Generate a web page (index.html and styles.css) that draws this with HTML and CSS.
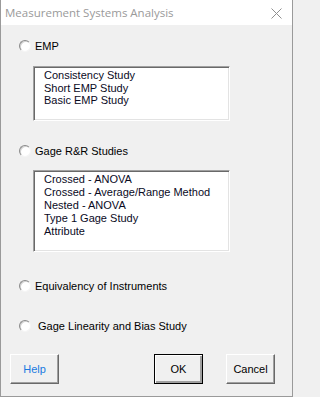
FILE: index.html
```html
<!DOCTYPE html>
<html>
<head>
<meta charset="utf-8">
<link rel="stylesheet" href="styles.css">
</head>
<body>
<div class="window">
  <div class="titlebar">
    <span class="title">Measurement Systems Analysis</span>
    <svg class="close" width="11" height="11" viewBox="0 0 11 11"><path d="M0.5 0.5 L10.5 10.5 M10.5 0.5 L0.5 10.5" stroke="#8f8f8f" stroke-width="1" fill="none"/></svg>
  </div>
  <div class="content">
    <div class="radio-row r1"><span class="radio"></span><span class="label">EMP</span></div>
    <div class="listbox lb1">
      <div>Consistency Study</div>
      <div>Short EMP Study</div>
      <div>Basic EMP Study</div>
    </div>
    <div class="radio-row r2"><span class="radio"></span><span class="label">Gage R&amp;R Studies</span></div>
    <div class="listbox lb2">
      <div>Crossed - ANOVA</div>
      <div>Crossed - Average/Range Method</div>
      <div>Nested - ANOVA</div>
      <div>Type 1 Gage Study</div>
      <div>Attribute</div>
    </div>
    <div class="radio-row r3"><span class="radio"></span><span class="label">Equivalency of Instruments</span></div>
    <div class="radio-row r4"><span class="radio"></span><span class="label">&nbsp;Gage Linearity and Bias Study</span></div>
    <div class="buttons">
      <button class="btn help">Help</button>
      <button class="btn ok">OK</button>
      <button class="btn cancel">Cancel</button>
    </div>
  </div>
</div>
</body>
</html>
```

FILE: styles.css
```css
html, body {
  margin: 0;
  padding: 0;
  background: #f0f0f0;
}
.window {
  width: 293px;
  height: 397px;
  box-sizing: border-box;
  border-left: 1px solid #9a9a9a;
  border-right: 1px solid #9a9a9a;
  border-bottom: 1px solid #9a9a9a;
  background: #f0f0f0;
  font-family: "Liberation Sans", Arial, sans-serif;
  font-size: 11px;
  color: #000;
  display: flex;
  flex-direction: column;
}
.titlebar {
  height: 25px;
  background: #fff;
  display: flex;
  align-items: center;
  justify-content: space-between;
  padding: 0 10px 0 4px;
  flex-shrink: 0;
}
.title {
  font-family: "Open Sans", "Noto Sans", sans-serif;
  font-size: 11.5px;
  color: #9a9a9a;
  margin-top: 0px;
}
.close {
  display: block;
  margin-top: 1px;
}
.content {
  padding-left: 18px;
  display: flex;
  flex-direction: column;
}
.radio-row {
  height: 12px;
  display: flex;
  align-items: center;
  gap: 4px;
  line-height: 13px;
}
.r1 { margin-top: 15px; }
.r2 { margin-top: 24px; }
.r3 { margin-top: 28px; }
.r4 { margin-top: 28px; }
.radio {
  width: 12px;
  height: 12px;
  box-sizing: border-box;
  border-radius: 50%;
  background: #fff;
  border: 1px solid;
  border-color: #8a8a8a #f4f4f4 #f4f4f4 #8a8a8a;
  box-shadow: inset 1px 1px 0 #d4d4d4;
  flex-shrink: 0;
}
.label {
  white-space: pre;
}
.listbox {
  margin-left: 14px;
  width: 197px;
  box-sizing: border-box;
  background: #fff;
  border: 1px solid;
  border-color: #a0a0a0 #fff #fff #a0a0a0;
  box-shadow: inset 1px 1px 0 #696969, inset -1px -1px 0 #e3e3e3;
  padding: 2px 0 0 10px;
  line-height: 12.7px;
  color: #0a0a1e;
}
.lb1 { margin-top: 14px; height: 55px; }
.lb2 { margin-top: 13px; height: 82px; line-height: 13px; padding-top: 1.5px; }
.buttons {
  margin-top: 22px;
  display: flex;
  margin-left: -9px;
}
.btn {
  width: 49px;
  height: 30px;
  box-sizing: border-box;
  background: #f0f0f0;
  font-family: "Liberation Sans", Arial, sans-serif;
  font-size: 11px;
  color: #000;
  padding: 0;
  border: 1px solid;
  border-color: #fff #696969 #696969 #fff;
  box-shadow: inset -1px -1px 0 #a0a0a0;
}
.help {
  color: #1a7ae0;
}
.ok {
  margin-left: 95px;
  border: 1px solid #000;
  box-shadow: inset 1px 1px 0 #fff, inset -2px -2px 0 #a0a0a0;
}
.cancel {
  margin-left: 23px;
}
```
